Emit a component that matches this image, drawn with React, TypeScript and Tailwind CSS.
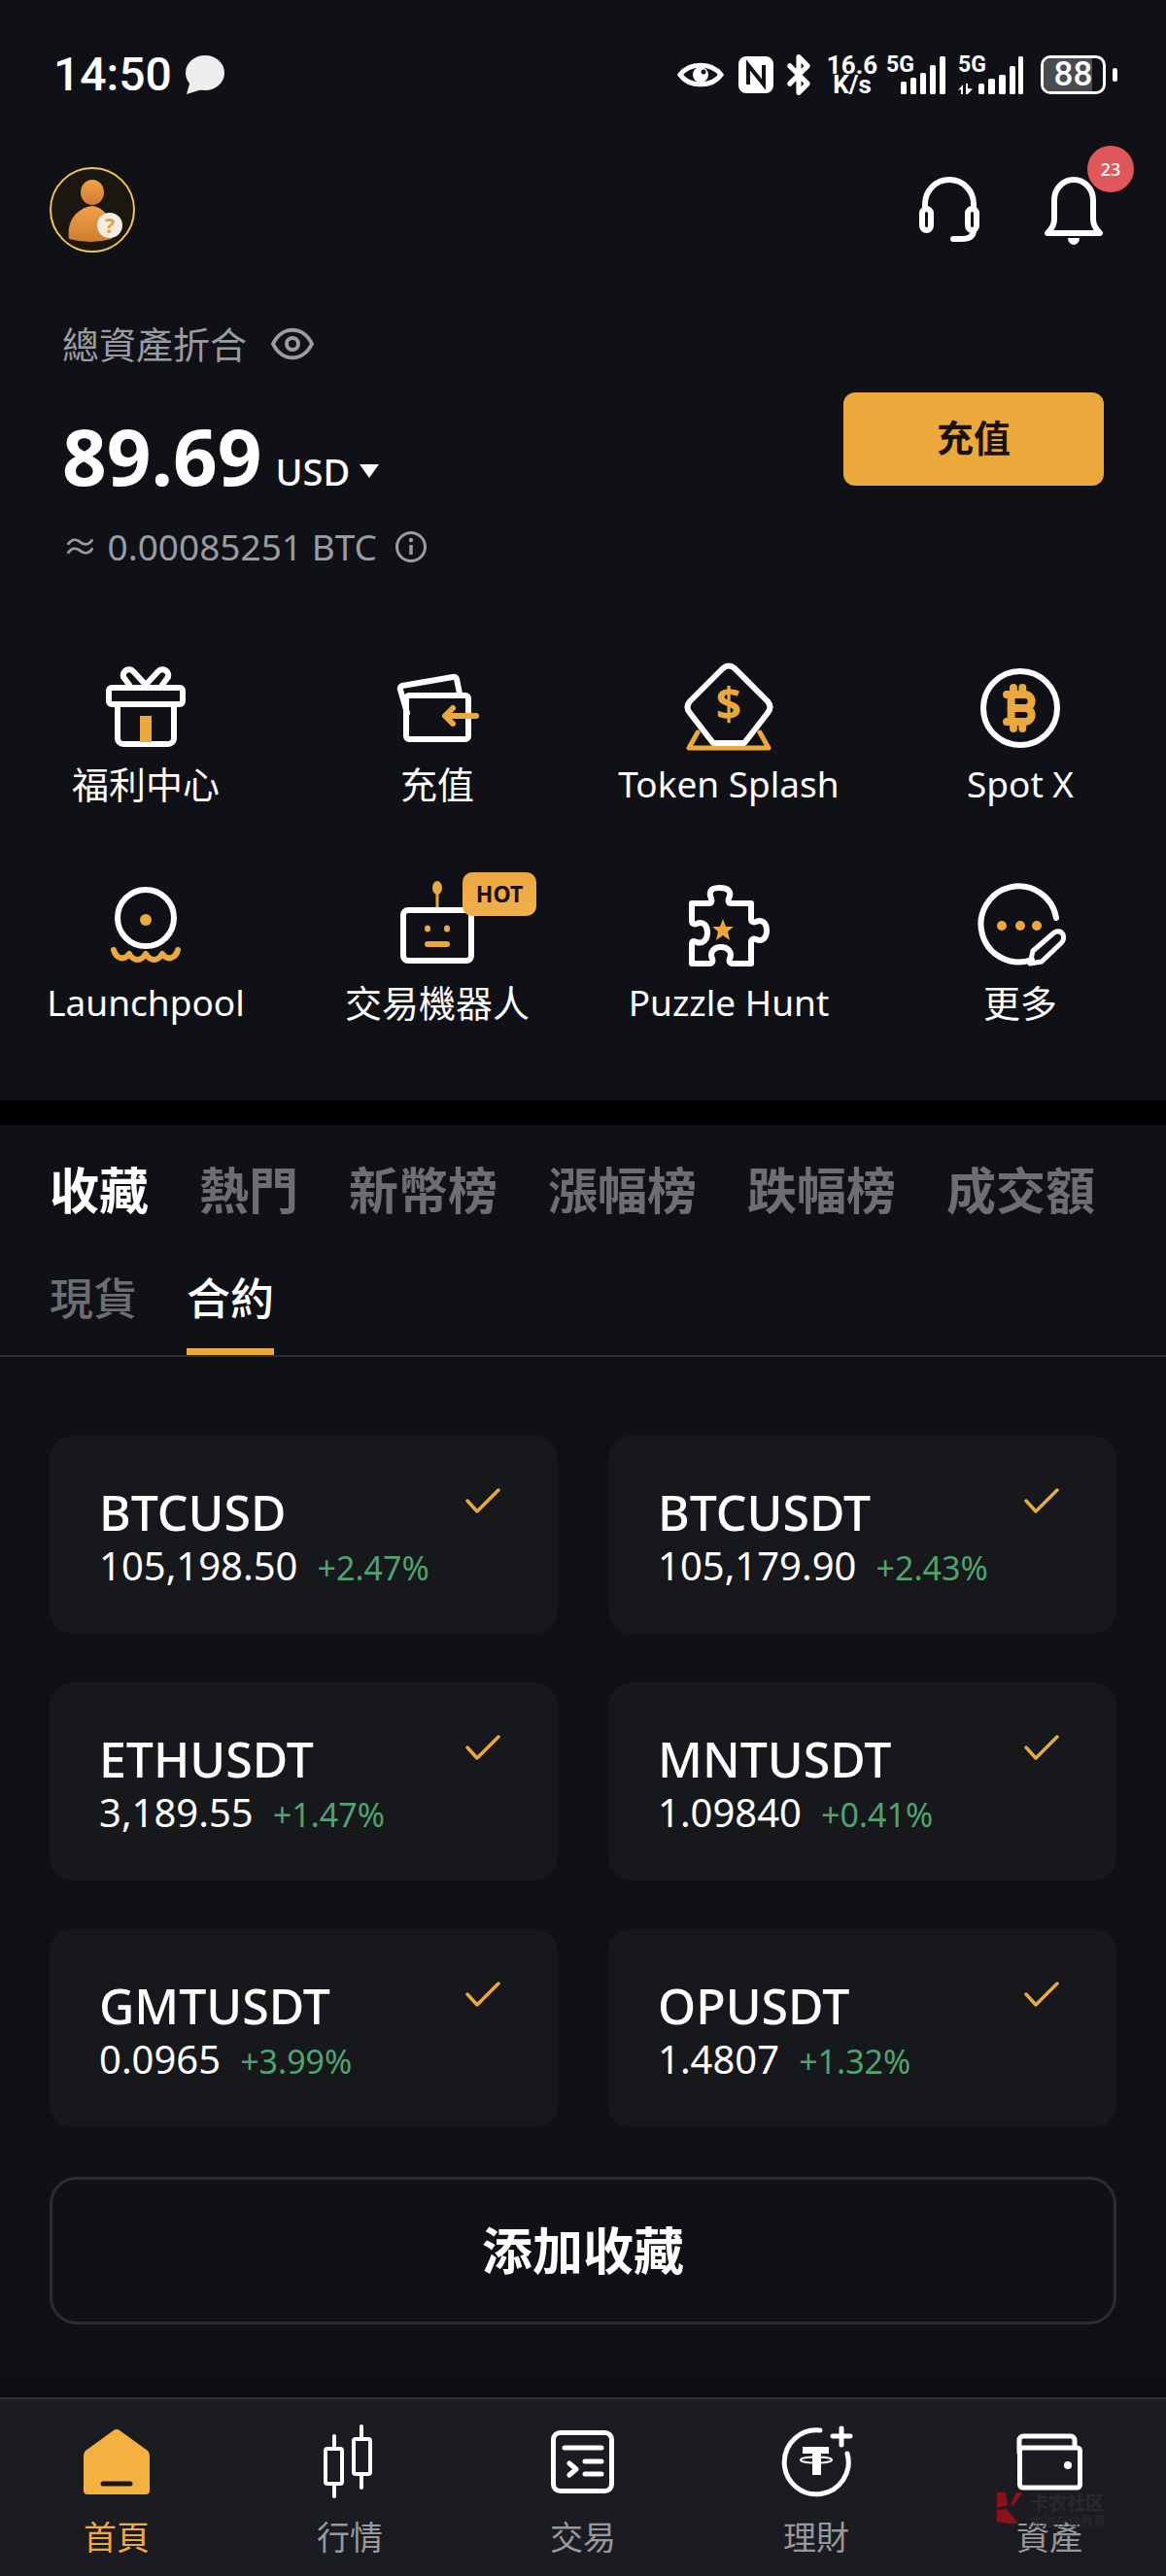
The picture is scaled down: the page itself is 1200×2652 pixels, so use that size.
import React from 'react'
import { Bluetooth } from 'lucide-react'
import { TbCurrencyBitcoin } from 'react-icons/tb'

const ORANGE = '#eca93b'

const Ico: React.FC<{ children: React.ReactNode; shift?: boolean }> = ({ children, shift }) => (
  <svg
    viewBox={shift ? '0 5 100 100' : '0 0 100 100'}
    className="w-[100px] h-[100px] overflow-visible"
    fill="none"
    stroke="#fff"
    strokeWidth={6}
    strokeLinecap="round"
    strokeLinejoin="round"
  >
    {children}
  </svg>
)

const GiftIcon = () => (
  <Ico>
    <path d="M50 25 L37 11 a6 6 0 0 0 -10 6 L33 25 M50 25 L63 11 a6 6 0 0 1 10 6 L67 25" />
    <rect x="12" y="28" width="76" height="17" rx="3" />
    <path d="M21 45 V80 a6 6 0 0 0 6 6 H73 a6 6 0 0 0 6 -6 V45" />
    <rect x="44" y="57" width="12" height="27" fill={ORANGE} stroke="none" />
  </Ico>
)

const DepositIcon = () => (
  <Ico>
    <path d="M19 54 L12 30 a3 3 0 0 1 2 -4 L66 17 a3 3 0 0 1 4 2 L73 34" />
    <rect x="18" y="36" width="64" height="45" rx="3" />
    <path d="M90 57 H59 M66 49 L58 57 L66 65" stroke={ORANGE} />
  </Ico>
)

const SplashIcon = () => (
  <Ico>
    <path d="M18 74 L9 90 H91 L82 74" stroke={ORANGE} strokeWidth={5} />
    <path
      d="M44 8 Q50 3 56 8 L90 42 Q95 48 90 54 L66 85 H34 L10 54 Q5 48 10 42 Z"
      fill="#101116"
    />
    <text x="50" y="62" textAnchor="middle" fontSize="46" fontWeight="700" fill={ORANGE} stroke="none">
      $
    </text>
  </Ico>
)

const SpotIcon = () => (
  <Ico>
    <circle cx="50" cy="49" r="38" />
    <TbCurrencyBitcoin x={22} y={21} size={56} color={ORANGE} strokeWidth={3.4} />
  </Ico>
)

const PoolIcon = () => (
  <Ico shift>
    <circle cx="50" cy="45" r="29" />
    <circle cx="50" cy="47" r="6" fill={ORANGE} stroke="none" />
    <path
      d="M17 78 C19 86 27 90 33 82 C38 90 45 90 50 82 C55 90 62 90 67 82 C73 90 81 86 83 78"
      stroke={ORANGE}
    />
  </Ico>
)

const RobotIcon = () => (
  <Ico shift>
    <path d="M50 34 V14" strokeWidth={3} stroke={ORANGE} />
    <ellipse cx="50" cy="14" rx="5" ry="7" fill={ORANGE} stroke="none" />
    <rect x="15" y="37" width="70" height="52" rx="5" />
    <ellipse cx="40" cy="56" rx="3" ry="3.5" fill={ORANGE} stroke="none" />
    <ellipse cx="60" cy="56" rx="3" ry="3.5" fill={ORANGE} stroke="none" />
    <rect x="37" y="69" width="26" height="6" rx="3" fill={ORANGE} stroke="none" />
  </Ico>
)

const PuzzleIcon = () => (
  <Ico shift>
    <path d="M12 30 H30 C32 30 33 28 32 25 C28 16 34 14 41 14 C48 14 54 17 50 25 C49 28 50 30 52 30 H73 V46 C73 49 75 50 78 49 C84 46 89 50 89 58 C89 66 84 70 78 67 C75 66 73 67 73 70 V92 H54 C51 92 50 90 51 87 C54 80 49 75 42 75 C35 75 30 80 33 87 C34 90 33 92 30 92 H12 V72 C12 69 14 68 17 70 C24 72 28 67 28 60 C28 53 24 48 17 51 C14 52 12 51 12 48 Z" />
    <path
      d="M44 46 L47 54 L55 54 L49 59 L51 68 L44 63 L37 68 L39 59 L33 54 L41 54 Z"
      fill={ORANGE}
      stroke="none"
    />
  </Ico>
)

const MoreIcon = () => (
  <Ico shift>
    <path d="M62 88 A39 39 0 1 1 87 45" />
    <circle cx="31" cy="53" r="5" fill={ORANGE} stroke="none" />
    <circle cx="50" cy="53" r="5" fill={ORANGE} stroke="none" />
    <circle cx="67" cy="53" r="5" fill={ORANGE} stroke="none" />
    <path d="M60 92 L63 79 L85 60 Q91 57 94 62 Q96 67 92 71 L72 90 Z" strokeWidth={5} />
  </Ico>
)

const shortcutsTop = [
  { label: '福利中心', icon: <GiftIcon /> },
  { label: '充值', icon: <DepositIcon /> },
  { label: 'Token Splash', icon: <SplashIcon />, latin: true },
  { label: 'Spot X', icon: <SpotIcon />, latin: true },
]

const shortcutsBottom = [
  { label: 'Launchpool', icon: <PoolIcon />, latin: true },
  { label: '交易機器人', icon: <RobotIcon />, hot: true },
  { label: 'Puzzle Hunt', icon: <PuzzleIcon />, latin: true },
  { label: '更多', icon: <MoreIcon /> },
]

const pairs = [
  { name: 'BTCUSD', price: '105,198.50', change: '+2.47%' },
  { name: 'BTCUSDT', price: '105,179.90', change: '+2.43%' },
  { name: 'ETHUSDT', price: '3,189.55', change: '+1.47%' },
  { name: 'MNTUSDT', price: '1.09840', change: '+0.41%' },
  { name: 'GMTUSDT', price: '0.0965', change: '+3.99%' },
  { name: 'OPUSDT', price: '1.4807', change: '+1.32%' },
]

const NavIco: React.FC<{ children: React.ReactNode }> = ({ children }) => (
  <svg
    viewBox="0 0 80 80"
    className="w-[80px] h-[80px]"
    fill="none"
    stroke="#fff"
    strokeWidth={5}
    strokeLinecap="round"
    strokeLinejoin="round"
  >
    {children}
  </svg>
)

const navItems = [
  {
    label: '首頁',
    active: true,
    icon: (
      <NavIco>
        <path
          d="M37 7 Q40 5 43 7 L72 28 Q74 30 74 33 V69 Q74 73 70 73 H10 Q6 73 6 69 V33 Q6 30 8 28 Z"
          fill="#f3b13f"
          stroke="none"
        />
        <path d="M26 62 H54" stroke="#1f1408" />
      </NavIco>
    ),
  },
  {
    label: '行情',
    icon: (
      <NavIco>
        <g strokeWidth={4}>
          <rect x="15" y="26" width="17" height="36" rx="2" />
          <path d="M24 13 V25 M24 63 V75" />
          <rect x="44" y="16" width="17" height="36" rx="2" />
          <path d="M52 3 V15 M52 53 V66" />
        </g>
      </NavIco>
    ),
  },
  {
    label: '交易',
    icon: (
      <NavIco>
        <rect x="9.5" y="9.5" width="60" height="60" rx="7" />
        <path d="M21 25 H59 M42 39 H59 M42 52 H59 M26 41 L33 47 L26 53" />
      </NavIco>
    ),
  },
  {
    label: '理財',
    icon: (
      <NavIco>
        <path d="M44 7 A33 33 0 1 0 72 31" />
        <path d="M66 5 V22 M57 13 H75" />
        <path d="M26 24 H53 V31 H45 V53 H36 V31 H26 Z" fill="#fff" stroke="none" />
        <ellipse cx="40" cy="37.5" rx="16" ry="3" strokeWidth={2} />
      </NavIco>
    ),
  },
  {
    label: '資產',
    icon: (
      <NavIco>
        <path d="M9 30 V17 a4 4 0 0 1 4 -4 H62 a4 4 0 0 1 4 4 V24" />
        <rect x="9.5" y="25" width="62" height="41" rx="3" />
        <circle cx="59" cy="43" r="4" fill="#fff" stroke="none" />
      </NavIco>
    ),
  },
]

const Signal: React.FC<{ arrows?: boolean }> = ({ arrows }) => (
  <div className={arrows ? 'relative w-[67px] h-[40px]' : 'relative w-[62px] h-[40px]'}>
    <span className="absolute left-0 top-0 text-[23px] leading-[20px] font-bold font-['Roboto',sans-serif]">5G</span>
    <svg viewBox={arrows ? '0 0 67 40' : '0 0 62 40'} className="w-full h-full" fill="#fff">
      {arrows ? (
        <>
          <path d="M0 36 L5 30 V40 H3 V35 Z M8 29 H10 V34 L15 34.5 L10 40 H8 Z" />
          <rect x="21" y="29" width="6" height="11" rx="1.5" />
          <rect x="31" y="24" width="7" height="16" rx="1.5" />
          <rect x="42" y="20" width="7" height="20" rx="1.5" />
          <rect x="53" y="11" width="6" height="29" rx="1.5" />
          <rect x="62" y="1" width="5" height="39" rx="1.5" />
        </>
      ) : (
        <>
          <rect x="15" y="27" width="6" height="13" rx="1.5" />
          <rect x="25" y="23" width="6" height="17" rx="1.5" />
          <rect x="35" y="18" width="6" height="22" rx="1.5" />
          <rect x="45" y="10" width="6" height="30" rx="1.5" />
          <rect x="55" y="1" width="6" height="39" rx="1.5" />
        </>
      )}
    </svg>
  </div>
)

const StatusBar = () => (
  <div className="h-[152px] pt-[2px] flex items-center justify-between pl-[55px] pr-[50px] text-white">
    <div className="flex items-center gap-[13px]">
      <span className="text-[48px] leading-[50px] font-medium font-['Roboto',sans-serif]">14:50</span>
      <svg viewBox="0 0 41 40" className="w-[41px] h-[40px]" fill="#eee">
        <ellipse cx="21" cy="18" rx="20" ry="18" />
        <path d="M2 40 L6 26 L18 35 Z" />
      </svg>
    </div>
    <div className="flex items-center">
      <svg viewBox="0 0 48 32" className="w-[48px] h-[32px]" fill="none" stroke="#fff" strokeWidth={5}>
        <path d="M3 16 C12 3 36 3 45 16 C36 29 12 29 3 16 Z" />
        <circle cx="24" cy="16" r="8" fill="#fff" stroke="none" />
        <circle cx="27" cy="13" r="2.5" fill="#101116" stroke="none" />
      </svg>
      <svg viewBox="0 0 36 38" className="w-[36px] h-[38px] ml-[15px]">
        <rect x="0" y="0" width="36" height="38" rx="8" fill="#fff" />
        <path d="M10 29 V9 L26 29 V9" fill="none" stroke="#101116" strokeWidth={4} />
      </svg>
      <Bluetooth size={44} strokeWidth={2.8} className="ml-[4px]" />
      <div className="ml-[5px] w-[56px] flex flex-col items-center font-bold font-['Roboto',sans-serif] text-[26px] leading-[20px]">
        <span>16.6</span>
        <span>K/s</span>
      </div>
      <div className="ml-[7px]">
        <Signal />
      </div>
      <div className="ml-[12px]">
        <Signal arrows />
      </div>
      <div className="relative ml-[18px] w-[67px] h-[40px] rounded-[10px] border-[3px] border-white overflow-hidden flex items-center justify-center">
        <div className="absolute left-0 inset-y-0 w-[50px] bg-[#4a4b4e]" />
        <span className="relative text-[35px] leading-[34px] font-medium font-['Roboto',sans-serif]">88</span>
      </div>
      <div className="ml-[7px] w-[5px] h-[14px] rounded-full bg-white" />
    </div>
  </div>
)

const Header = () => (
  <div className="flex items-start justify-between pt-[20px] pl-[51px] pr-[60px]">
    <svg viewBox="0 0 88 88" className="w-[88px] h-[88px]">
      <defs>
        <linearGradient id="skin" x1="0" y1="0" x2="0" y2="1">
          <stop offset="0" stopColor="#f0a24a" />
          <stop offset="1" stopColor="#cf7d30" />
        </linearGradient>
      </defs>
      <circle cx="44" cy="44" r="43" fill="#1c1610" stroke="#efc651" strokeWidth="2" />
      <ellipse cx="44" cy="26" rx="12" ry="13" fill="url(#skin)" />
      <path d="M20 74 C17 56 28 42 44 40 C58 42 67 56 64 74 Q42 80 20 74 Z" fill="url(#skin)" />
      <circle cx="62" cy="60" r="13" fill="#f3ece2" />
      <text x="62" y="68" textAnchor="middle" fontSize="22" fontWeight="700" fill="#e3a33c">
        ?
      </text>
    </svg>
    <div className="flex items-start gap-[58px] mt-[10px] relative">
      <svg viewBox="0 0 70 70" className="w-[70px] h-[70px]" fill="none" stroke="#fff" strokeWidth={6} strokeLinecap="round">
        <path d="M10 32 V28 A25 25 0 0 1 60 28 V32" />
        <rect x="7" y="33" width="9" height="22" rx="4.5" />
        <rect x="54" y="33" width="9" height="22" rx="4.5" />
        <path d="M60 56 Q59 64 48 64 H39" />
      </svg>
      <svg viewBox="0 0 70 72" className="w-[70px] h-[72px]" fill="none" stroke="#fff" strokeWidth={6} strokeLinejoin="round">
        <path d="M8 58 C12 54 15 50 15 44 V24 A20 21 0 0 1 55 24 V44 C55 50 58 54 62 58 Z" />
        <path d="M29 63 H41 A6 7 0 0 1 29 63 Z" fill="#fff" stroke="none" />
      </svg>
      <div className="absolute right-[-27px] top-[-32px] w-[48px] h-[48px] rounded-full bg-[#e0565a] text-white text-[18px] font-medium flex items-center justify-center">
        23
      </div>
    </div>
  </div>
)

const Balance = () => (
  <div className="mt-[74px] flex items-start justify-between pl-[64px] pr-[64px]">
    <div>
      <div className="flex items-center text-[#9a9ca0] text-[38px] leading-[40px]">
        <span>總資產折合</span>
        <svg viewBox="0 0 46 36" className="w-[46px] h-[36px] ml-[24px]" fill="none" stroke="#9a9ca0" strokeWidth={4}>
          <path d="M3 18 C12 -1 34 -1 43 18 C34 37 12 37 3 18 Z" />
          <circle cx="23" cy="18" r="6" />
        </svg>
      </div>
      <div className="mt-[55px] flex items-baseline text-white">
        <span className="text-[80px] leading-[80px] font-bold">89.69</span>
        <span className="ml-[14px] text-[38px] leading-[40px] font-medium">USD</span>
        <span className="ml-[10px] w-0 h-0 border-x-[10px] border-x-transparent border-t-[14px] border-t-white -translate-y-[8px]" />
      </div>
      <div className="mt-[34px] flex items-center text-[#9a9ca0] text-[37px] leading-[40px]">
        <span>≈ 0.00085251 BTC</span>
        <svg viewBox="0 0 34 34" className="w-[34px] h-[34px] ml-[18px]" fill="none" stroke="#9a9ca0" strokeWidth={3}>
          <circle cx="17" cy="17" r="14.5" />
          <path d="M17 15 V25" strokeWidth={3.5} />
          <circle cx="17" cy="10" r="2.2" fill="#9a9ca0" stroke="none" />
        </svg>
      </div>
    </div>
    <button className="mt-[70px] w-[268px] h-[96px] pb-[4px] rounded-[12px] bg-[#eca93b] text-[#1a1108] text-[38px] font-semibold">
      充值
    </button>
  </div>
)

const Shortcut: React.FC<{ label: string; icon: React.ReactNode; hot?: boolean; latin?: boolean }> = ({
  label,
  icon,
  hot,
  latin,
}) => (
  <div className="flex flex-col items-center">
    <div className="relative">
      {icon}
      {hot && (
        <div className="absolute left-[76px] top-[-7px] w-[76px] h-[45px] rounded-[10px] bg-linear-to-b from-[#eda83f] to-[#eeb04c] text-[#1a1108] text-[23px] font-bold flex items-center justify-center">
          HOT
        </div>
      )}
    </div>
    <span
      className={
        latin
          ? 'mt-[4px] text-white text-[37px] leading-[46px]'
          : 'mt-[4px] text-white text-[38px] leading-[46px]'
      }
    >
      {label}
    </span>
  </div>
)

const Shortcuts = () => (
  <div>
    <div className="mt-[97px] grid grid-cols-4">
      {shortcutsTop.map((s) => (
        <Shortcut key={s.label} {...s} />
      ))}
    </div>
    <div className="mt-[75px] grid grid-cols-4">
      {shortcutsBottom.map((s) => (
        <Shortcut key={s.label} {...s} />
      ))}
    </div>
  </div>
)

const Tabs = () => (
  <div>
    <div className="pt-[37px] pl-[51px] flex gap-[52px] text-[51px] leading-[60px] font-bold text-[#6d6e72]">
      <span className="text-white">收藏</span>
      <span>熱門</span>
      <span>新幣榜</span>
      <span>漲幅榜</span>
      <span>跌幅榜</span>
      <span>成交額</span>
    </div>
    <div className="mt-[54px] pl-[51px] flex gap-[51px] border-b-2 border-[#2c2d31] text-[45px] leading-[56px] font-medium text-[#6d6e72]">
      <span className="pb-[23px]">現貨</span>
      <span className="pb-[23px] text-white border-b-[7px] border-[#eca93b]">合約</span>
    </div>
  </div>
)

const PairCard: React.FC<{ name: string; price: string; change: string }> = ({ name, price, change }) => (
  <div className="h-[204px] rounded-[24px] bg-[#16181c] flex justify-between pl-[51px] pr-[59px] pt-[49px]">
    <div>
      <div className="text-white text-[50px] leading-[60px] font-medium">{name}</div>
      <div className="mt-[2px] flex items-baseline">
        <span className="text-white text-[40px] leading-[46px]">{price}</span>
        <span className="ml-[20px] text-[#4fa36e] text-[34px] leading-[46px]">{change}</span>
      </div>
    </div>
    <svg viewBox="0 0 36 27" className="w-[36px] h-[27px] mt-[5px]" fill="none" stroke={ORANGE} strokeWidth={3.5} strokeLinecap="round" strokeLinejoin="round">
      <path d="M2 13 L12 24 L34 2" />
    </svg>
  </div>
)

const BottomNav = () => (
  <div className="relative h-[184px] border-t-2 border-[#2e3036] bg-[#1b1c21] grid grid-cols-5 pt-[25px]">
    {navItems.map((item) => (
      <div key={item.label} className="flex flex-col items-center">
        {item.icon}
        <span
          className={
            item.active
              ? 'mt-[17px] text-[34px] leading-[40px] text-[#eeac3e]'
              : 'mt-[17px] text-[34px] leading-[40px] text-[#98999d]'
          }
        >
          {item.label}
        </span>
      </div>
    ))}
    {/* 水印 */}
    <div className="absolute left-[1026px] top-[96px] flex items-start gap-[8px] font-['Noto_Sans_CJK_SC',sans-serif] opacity-90">
      <svg viewBox="0 0 26 32" className="w-[26px] h-[32px]" fill="#9a1018">
        <path d="M0 0 H9 L11 13 L0 16 Z M0 18 L10 17 L22 32 H12 L0 30 Z M14 12 L20 0 H26 L17 14 Z" />
      </svg>
      <div className="flex flex-col">
        <span className="text-[19px] leading-[20px] font-bold text-[#2b2c31]">卡农社区</span>
        <span className="mt-[2px] text-[13px] leading-[13px] text-[#2b2c31]">金融在线教育</span>
      </div>
    </div>
  </div>
)

const App: React.FC = () => {
  return (
    <div className="w-[1200px] h-[2652px] flex flex-col bg-[#101116] font-['Noto_Sans','Noto_Sans_CJK_TC',sans-serif]">
      <div className="flex-1">
        <StatusBar />
        <Header />
        <Balance />
        <Shortcuts />

        {/* 分隔 */}
        <div className="mt-[78px] h-[25px] bg-black" />

        <Tabs />

        {/* 收藏列表 */}
        <div className="mt-[81px] mx-[51px] grid grid-cols-2 gap-x-[52px] gap-y-[50px]">
          {pairs.map((p) => (
            <PairCard key={p.name} {...p} />
          ))}
        </div>

        <button className="mt-[51px] mx-[51px] w-[1098px] h-[152px] rounded-[28px] border-[3px] border-[#2c2d33] text-white text-[52px] font-bold">
          添加收藏
        </button>
      </div>
      <div className="h-[28px] bg-linear-to-b from-[#101116] to-[#0b0c11]" />
      <BottomNav />
    </div>
  )
}

export default App
